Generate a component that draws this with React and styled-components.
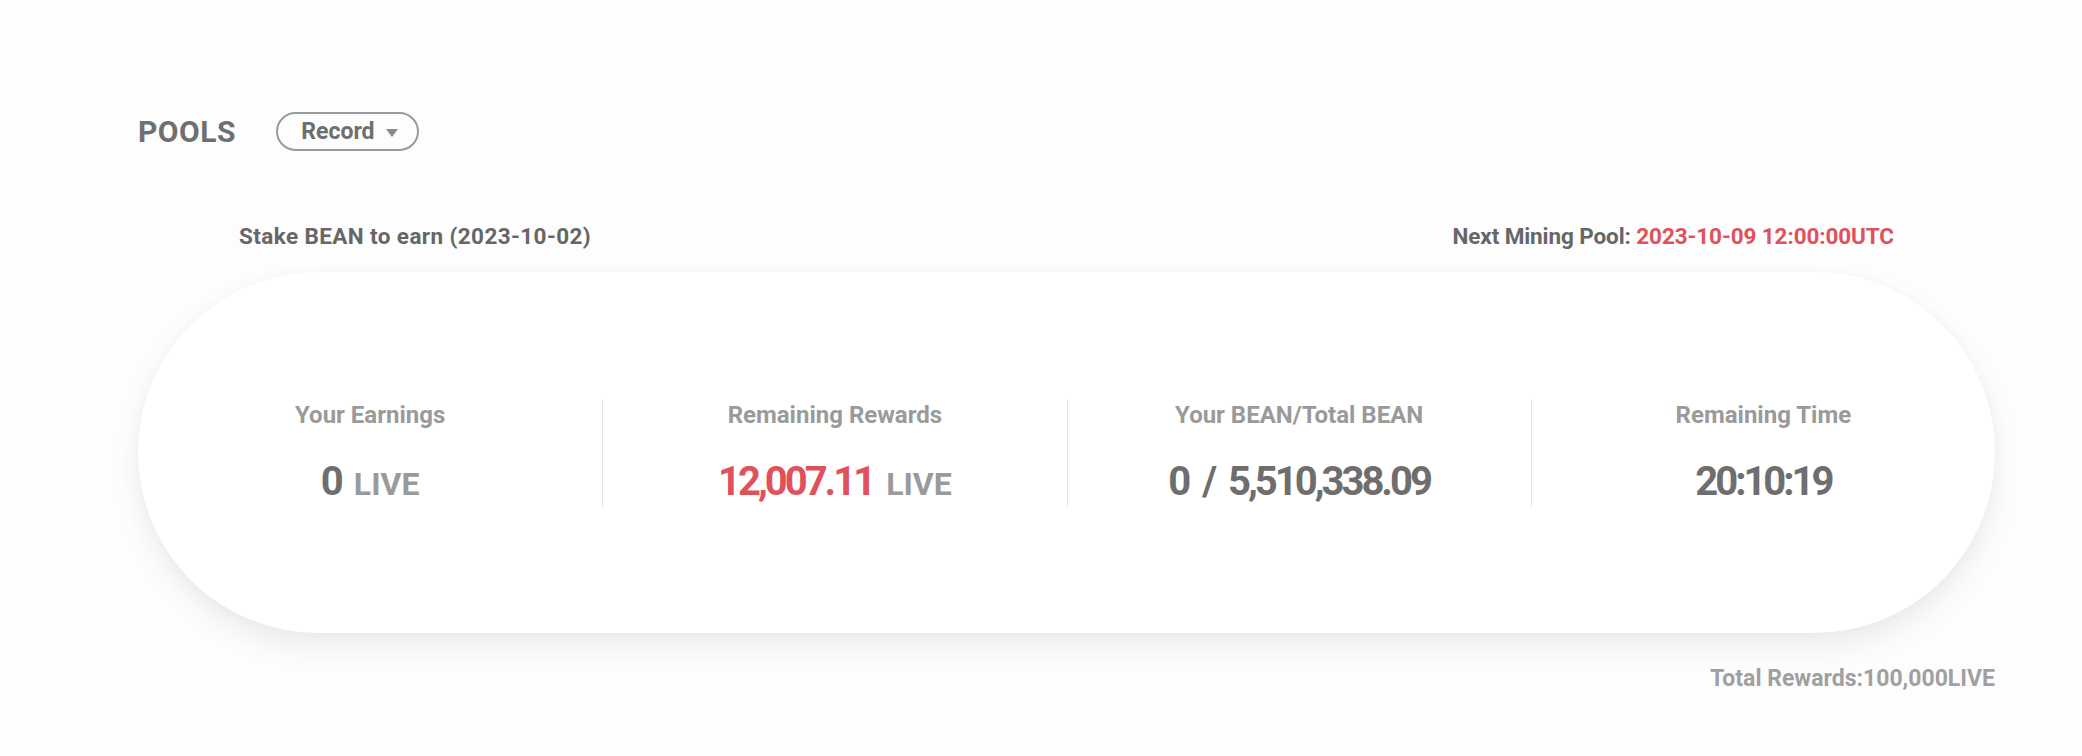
import React from 'react';
import styled, { createGlobalStyle } from 'styled-components';

const GlobalStyle = createGlobalStyle`
  * { box-sizing: border-box; }
  body {
    margin: 0;
    background: #fdfdfd;
    font-family: Roboto, "Liberation Sans", sans-serif;
    font-weight: 700;
  }
`;

const stats = [
  { label: 'Your Earnings', value: '0', unit: 'LIVE' },
  { label: 'Remaining Rewards', value: '12,007.11', unit: 'LIVE', highlight: true },
  { label: 'Your BEAN/Total BEAN', value: '0 / 5,510,338.09' },
  { label: 'Remaining Time', value: '20:10:19' },
];

const App = () => {
  return (
    <Page>
      <GlobalStyle />
      <Header>
        <Title>POOLS</Title>
        <RecordButton type="button">
          Record
          <Caret />
        </RecordButton>
      </Header>

      <SubRow>
        <Stake>Stake BEAN to earn (2023-10-02)</Stake>
        <NextPool>
          Next Mining Pool: <Red>2023-10-09 12:00:00UTC</Red>
        </NextPool>
      </SubRow>

      <Card>
        {stats.map((s, i) => (
          <Stat key={s.label} $first={i === 0}>
            <Label>{s.label}</Label>
            <Value $highlight={s.highlight}>
              {s.value}
              {s.unit && <Unit>{s.unit}</Unit>}
            </Value>
          </Stat>
        ))}
      </Card>

      <Footer>Total Rewards:100,000LIVE</Footer>
    </Page>
  );
};

const Page = styled.div`
  padding: 112px 87px 40px 138px;
`;

const Header = styled.div`
  display: flex;
  align-items: center;
  gap: 40px;
  height: 39px;
`;

const Title = styled.div`
  font-size: 30px;
  color: #6f6f6f;
  letter-spacing: 0.5px;
`;

const RecordButton = styled.button`
  display: flex;
  align-items: center;
  justify-content: center;
  gap: 11px;
  width: 143px;
  height: 39px;
  padding: 0 0 0 4px;
  border: 2px solid #9a9a9a;
  border-radius: 20px;
  background: transparent;
  font-family: inherit;
  font-weight: 700;
  font-size: 23px;
  color: #6e6e6e;
  cursor: pointer;
`;

const Caret = styled.span`
  width: 0;
  height: 0;
  border-left: 6px solid transparent;
  border-right: 6px solid transparent;
  border-top: 8px solid #8a8a8a;
  margin-top: 2px;
`;

const SubRow = styled.div`
  display: flex;
  justify-content: space-between;
  margin-top: 71px;
  padding: 0 101px;
  font-size: 22.5px;
  line-height: 28px;
  color: #666;
`;

const Stake = styled.span`
  letter-spacing: 0.4px;
`;

const NextPool = styled.span`
  letter-spacing: -0.1px;
`;

const Red = styled.span`
  color: #e0515b;
`;

const Card = styled.div`
  display: grid;
  grid-template-columns: repeat(4, 1fr);
  align-items: center;
  margin-top: 22px;
  height: 361px;
  background: #fff;
  border-radius: 999px;
  box-shadow: 0 14px 28px rgba(0, 0, 0, 0.07), 0 0 12px rgba(0, 0, 0, 0.025);
`;

const Stat = styled.div`
  display: flex;
  flex-direction: column;
  align-items: center;
  height: 108px;
  padding-top: 2px;
  border-left: ${(p) => (p.$first ? 'none' : '1px solid #e4e4e4')};
`;

const Label = styled.div`
  font-size: 24px;
  line-height: 28px;
  color: #9a9a9a;
`;

const Value = styled.div`
  margin-top: 30px;
  font-size: 40px;
  line-height: 46px;
  letter-spacing: -3px;
  word-spacing: 7px;
  color: ${(p) => (p.$highlight ? '#e0515b' : '#6e6e6e')};
`;

const Unit = styled.span`
  margin-left: 13px;
  font-size: 32px;
  letter-spacing: 0;
  color: #9a9a9a;
`;

const Footer = styled.div`
  margin-top: 32px;
  text-align: right;
  font-size: 23px;
  line-height: 28px;
  color: #a0a0a0;
`;

export default App;
